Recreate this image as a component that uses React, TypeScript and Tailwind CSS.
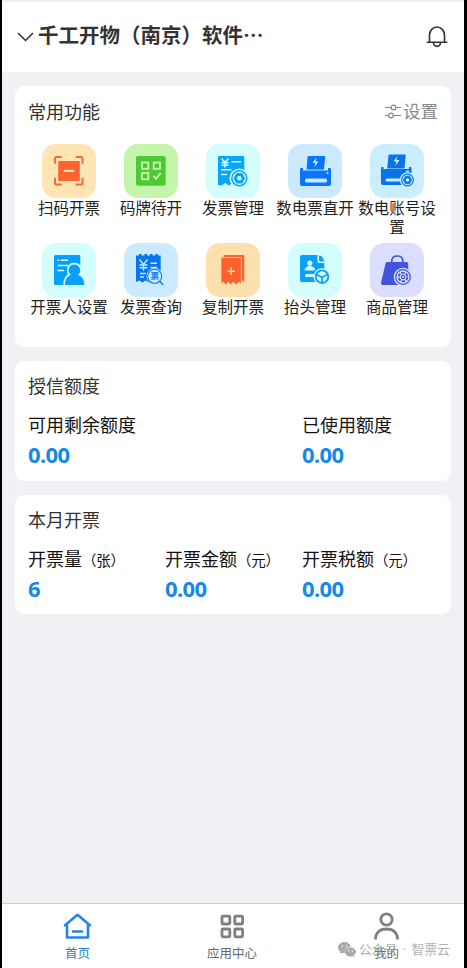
import React from "react";

const features = [
  { name: "扫码开票", bg: "bg-[#ffe5b4]", icon: <ScanIcon /> },
  { name: "码牌待开", bg: "bg-[#c5f5ab]", icon: <CodeIcon /> },
  { name: "发票管理", bg: "bg-[#d3fdff]", icon: <InvoiceIcon /> },
  { name: "数电票直开", bg: "bg-[#cbeaff]", icon: <PrinterIcon /> },
  { name: "数电账号设置", bg: "bg-[#cbeeff]", icon: <AccountIcon /> },
  { name: "开票人设置", bg: "bg-[#d3fdff]", icon: <DrawerIcon /> },
  { name: "发票查询", bg: "bg-[#cbeaff]", icon: <QueryIcon /> },
  { name: "复制开票", bg: "bg-[#fde0ae]", icon: <CopyIcon /> },
  { name: "抬头管理", bg: "bg-[#d3fdff]", icon: <TitleIcon /> },
  { name: "商品管理", bg: "bg-[#dcdeff]", icon: <GoodsIcon /> },
];

function ScanIcon() {
  return (
    <svg viewBox="0 0 54 54" fill="none">
      <path d="M13 19v-4.500q0-1.500 1.500-1.500H19M34.500 13H39q1.500 0 1.500 1.500V19M40.500 34.500V39q0 1.500-1.500 1.500h-4.500M19 40.500h-4.500Q13 40.500 13 39v-4.500" stroke="#fb6830" strokeWidth="2" strokeLinecap="round" />
      <rect x="16.200" y="17" width="21.600" height="20" rx="1" fill="#ff6430" />
      <path d="M22.500 26.800h8.800" stroke="#ffe5b4" strokeWidth="2.200" strokeLinecap="round" />
    </svg>
  );
}

function CodeIcon() {
  return (
    <svg viewBox="0 0 54 54" fill="none">
      <rect x="12" y="12" width="29.700" height="29.700" rx="2" fill="#4dc934" />
      <g stroke="#c5f5ab" strokeWidth="1.900">
        <rect x="18" y="18.500" width="6.300" height="6.300" />
        <rect x="29.700" y="18.500" width="6.300" height="6.300" />
        <rect x="18" y="29" width="6.300" height="6.300" />
        <path d="M29.500 32l2.500 2.800 4.700-5.800" />
      </g>
    </svg>
  );
}

function Gear({ x, y, r, color, bg }: { x: number; y: number; r: number; color: string; bg: string }) {
  return (
    <g transform={`translate(${x} ${y}) scale(${r / 8})`}>
      <circle r="9.500" fill={bg} />
      <circle r="7.200" fill={bg} stroke={color} strokeWidth="1.500" />
      <path d="M-2.500-4.500h5L5 0 2.500 4.500h-5L-5 0z" fill={color} stroke={color} strokeWidth="1" strokeLinejoin="round" />
      <circle r="2.200" fill={bg} />
    </g>
  );
}

function InvoiceIcon() {
  return (
    <svg viewBox="0 0 54 54" fill="none">
      <path d="M13 12h24.300q1 0 1 1v28l-4-2-4 2.500-4-2.500-3.500 2.500-3.500-2.500-3.500 2.500L12 41V13q0-1 1-1z" fill="#08a5f8" />
      <path d="M15.500 14.500l3.500 4 3.500-4M19 18.500v5M15.500 18.800h7M15.500 21.300h7M25.500 17.700h9.500M15 25.800h10.500M15 30.500h6" stroke="#d3fdff" strokeWidth="1.500" />
      <Gear x={33.3} y={34.3} r={8.3} color="#08a5f8" bg="#d3fdff" />
    </svg>
  );
}

function PrinterIcon() {
  return (
    <svg viewBox="0 0 54 54" fill="none">
      <path d="M12 25q0-1 1-1h2v2.500h25V24h2q1 0 1 1v15q0 2-2 2H14q-2 0-2-2z" fill="#0874ff" />
      <path d="M20.500 12h15.800q1 0 .9 1L36 25.500H18.500L19.600 13q0-1 .9-1z" fill="#0874ff" />
      <path d="M28.500 13.500l-4 5.500h3l-1.200 4.500 4.200-6h-3z" fill="#cbeaff" />
      <rect x="17" y="34.500" width="22" height="4" rx="1.500" fill="#cbeaff" />
      <circle cx="39.500" cy="29" r="1" fill="#cbeaff" />
    </svg>
  );
}

function AccountIcon() {
  return (
    <svg viewBox="0 0 54 54" fill="none">
      <path d="M11 24q0-1 1-1h1.500v2H39v-2h1.500q1 0 1 1v15q0 2-2 2H13q-2 0-2-2z" fill="#0874e9" />
      <path d="M19.500 10.500h15.300q1 0 .9 1l-1.200 13H17.200l1.300-13q0-1 1-1z" fill="#0874e9" />
      <path d="M27.500 12l-4 5.500h3L25.300 22l4.200-6h-3z" fill="#cbeeff" />
      <path d="M17 36h15" stroke="#cbeeff" strokeWidth="3" strokeLinecap="round" />
      <path d="M36 27.500h3" stroke="#cbeeff" strokeWidth="1.500" />
      <Gear x={37.5} y={36} r={6.5} color="#0874e9" bg="#cbeeff" />
    </svg>
  );
}

function DrawerIcon() {
  const person = "M32.300 21.500a5.800 5.800 0 0 0-3.300 10.500c-4 1.200-6 4.500-6 10h19.300c0-5.500-2.300-8.800-6.500-10a5.800 5.800 0 0 0-3.500-10.500z";
  return (
    <svg viewBox="0 0 54 54" fill="none">
      <rect x="12" y="12" width="26.300" height="30" rx="1.500" fill="#08a0fa" />
      <path d="M15.500 17.300h1.500M18.500 17.300h7.500M15.500 22.500h10.500M15.500 27.500h6.500" stroke="#d3fdff" strokeWidth="1.500" />
      <path d={person} stroke="#d3fdff" strokeWidth="3.400" />
      <path d={person} fill="#08a0fa" />
    </svg>
  );
}

function QueryIcon() {
  return (
    <svg viewBox="0 0 54 54" fill="none">
      <path d="M12 12.500h3V11h2.500v1.500h3V11H23v1.500h3V11h2.500v1.500h3V11H34v1.500h2.700v26L34 37.500l-3 2-3-2-3 2-3.500-2-3 2-3-2-3.500 1.500z" fill="#0874ee" />
      <path d="M15.500 16.500l4 5 4-5M19.500 21.500v6M15.500 22h8M15.500 24.700h8M26.500 20.300h6.500M26.500 24.500h6.500M16 30.500h6M16 34h4" stroke="#cbeaff" strokeWidth="1.400" />
      <circle cx="30.700" cy="33.300" r="8.200" fill="#cbeaff" />
      <circle cx="30.700" cy="33.300" r="7" stroke="#0874ee" strokeWidth="1.100" />
      <path d="M36 38.500l3.200 3.500" stroke="#0874ee" strokeWidth="1.300" />
      <text x="30.700" y="36.400" textAnchor="middle" fontSize="8.500" fontWeight="700" fill="#0874ee">票</text>
    </svg>
  );
}

function CopyIcon() {
  return (
    <svg viewBox="0 0 54 54" fill="none">
      <path d="M17.500 14v-1.200q0-.8.8-.8h19.200q.8 0 .8.800V39l-3-2V14z" fill="#f86532" />
      <path d="M15 15.500q0-1 1-1h18.300q1 0 1 1V41l-2.500-2-2.500 3-3-3-2.500 3-2.500-3-2.500 3-2.500-3-2.300 2z" fill="#ff6030" stroke="#fde0ae" strokeWidth=".7" />
      <path d="M25.200 24.500v7.500M21.500 28.200h7.500" stroke="#fde0ae" strokeWidth="1.600" />
    </svg>
  );
}

function TitleIcon() {
  return (
    <svg viewBox="0 0 54 54" fill="none">
      <path d="M14 12h15.500v6q0 2 2 2h4.800v19H14q-2 0-2-2V14q0-2 2-2z" fill="#08a0fa" />
      <path d="M31 12.500v4.500q0 1.500 1.500 1.500h4l-2-4q-.8-2-3.500-2z" fill="#08a0fa" />
      <circle cx="21.800" cy="20" r="2.600" fill="#d3fdff" />
      <path d="M21.800 21v3M17 27q0-3 4.800-3.700Q26.700 24 26.700 27z" stroke="#d3fdff" strokeWidth="1" fill="#d3fdff" />
      <path d="M18.500 32.500h7.500" stroke="#d3fdff" strokeWidth="3" strokeLinecap="round" />
      <circle cx="34" cy="33.700" r="8.500" fill="#d3fdff" />
      <circle cx="34" cy="33.700" r="6.300" stroke="#08a0fa" strokeWidth="1.800" />
      <path d="M28.500 31.500l5.500 2.700 5.500-2.700M34 34v5.500" stroke="#08a0fa" strokeWidth="1.700" />
    </svg>
  );
}

function GoodsIcon() {
  return (
    <svg viewBox="0 0 54 54" fill="none">
      <path d="M21.800 21v-3q0-5 5.500-5t5.500 5v3" stroke="#4055dc" strokeWidth="1.700" />
      <path d="M17.200 19h19.300q1.500 0 1.700 1.500L38.500 40q.3 2-1.700 2H12.500q-1.800 0-1.500-2l4.500-19.500Q15.800 19 17.200 19z" fill="#4055dc" />
      <circle cx="33" cy="34" r="9.300" fill="#dcdeff" />
      <circle cx="33" cy="34" r="7.300" stroke="#4055dc" strokeWidth="1.300" />
      <circle cx="33" cy="34" r="4.300" stroke="#4055dc" strokeWidth="1.900" strokeDasharray="3.300 1.200" />
      <circle cx="33" cy="34" r="1.600" stroke="#4055dc" strokeWidth="1.200" />
    </svg>
  );
}

function Stat({ label, unit, value }: { label: string; unit?: string; value: string }) {
  return (
    <div className="whitespace-nowrap">
      <div className="h-7 text-[18px] leading-[28px] text-[#111]">
        {label}
        {unit && <span className="text-[14.500px] tracking-[-0.300px]">{unit}</span>}
      </div>
      <div className="mt-px font-['Noto_Sans'] text-[22px] leading-[30px] font-bold tracking-[-0.600px] text-[#1688e6]">{value}</div>
    </div>
  );
}

function App() {
  return (
    <div className="flex h-[968px] w-[467px] flex-col overflow-hidden border-r-[3px] border-l-2 border-black bg-[#f0f0f5] pt-0.5 font-['Noto_Sans_CJK_SC',sans-serif]">
      <header className="flex h-[70px] shrink-0 items-center bg-white pr-4 pl-[15px]">
        <svg className="h-[10px] w-[17px]" viewBox="0 0 17 10" fill="none">
          <path d="M1 1l7.500 7.500L16 1" stroke="#333" strokeWidth="1.500" />
        </svg>
        <h1 className="mb-1.5 ml-1 text-[20.500px] font-bold text-[#333]">千工开物（南京）软件…</h1>
        <svg className="mb-0.5 ml-auto h-[23px] w-[22px]" viewBox="0 0 22 23" fill="none" stroke="#333" strokeWidth="1.600">
          <path d="M3.500 17.200V10a7.500 8 0 0 1 15 0v7.200M.7 17.200h20.600M7.500 18c.5 4.500 6.500 4.500 7 0" />
        </svg>
      </header>

      <main className="flex flex-col gap-[14px] px-[13px] pt-[14px]">
        <section className="h-[261px] rounded-[9px] bg-white px-[13px]">
          <div className="flex h-[58px] items-center justify-between pb-2 text-[18px]">
            <h2 className="text-[#333]">常用功能</h2>
            <div className="flex items-center gap-0.5 text-[17.500px] text-[#888]">
              <svg className="h-[15px] w-[16px]" viewBox="0 0 16 15" fill="none" stroke="#888" strokeWidth="1.200">
                <path d="M0 3.500h6M11 3.500h5M0 11.500h3.500M8.500 11.500H16" />
                <circle cx="8.500" cy="3.500" r="2.400" />
                <circle cx="6" cy="11.500" r="2.400" />
              </svg>
              设置
            </div>
          </div>
          <div className="grid grid-cols-5 gap-y-2">
            {features.map((item) => (
              <div key={item.name} className="flex flex-col items-center">
                <div className={`h-[54px] w-[54px] rounded-[14px] ${item.bg}`}>{item.icon}</div>
                <div className="w-[79px] text-center text-[15.500px] leading-[18.500px] text-[#222]">{item.name}</div>
              </div>
            ))}
          </div>
        </section>

        <section className="h-[120px] rounded-[9px] bg-white px-[13px] pt-[10px]">
          <h2 className="mb-[11px] text-[18px] leading-7 text-[#333]">授信额度</h2>
          <div className="grid grid-cols-[274px_1fr]">
            <Stat label="可用剩余额度" value="0.00" />
            <Stat label="已使用额度" value="0.00" />
          </div>
        </section>

        <section className="h-[119px] rounded-[9px] bg-white px-[13px] pt-[10px]">
          <h2 className="mb-[11px] text-[18px] leading-7 text-[#333]">本月开票</h2>
          <div className="grid grid-cols-[137px_137px_1fr]">
            <Stat label="开票量" unit="（张）" value="6" />
            <Stat label="开票金额" unit="（元）" value="0.00" />
            <Stat label="开票税额" unit="（元）" value="0.00" />
          </div>
        </section>
      </main>

      <nav className="relative mt-auto grid h-[65px] shrink-0 grid-cols-3 border-t border-[#ccc] bg-white pt-2 text-[12.500px] leading-[18px] text-[#666]">
        <div className="flex flex-col items-center gap-[3px] pr-[3px] text-[#1c7fc4]">
          <svg className="h-[29px] w-[29px]" viewBox="0 0 29 29" fill="none" stroke="#2485e8" strokeWidth="2.600" strokeLinejoin="round" strokeLinecap="round">
            <path d="M2 13.200L14.500 2.800 27 13.200M4 12v13.500h21V12M10 19.500h9" />
          </svg>
          首页
        </div>
        <div className="flex flex-col items-center gap-[3px] pr-0.5">
          <svg className="h-[29px] w-[29px]" viewBox="0 0 29 29" fill="none" stroke="#808080" strokeWidth="2.800">
            <rect x="4" y="4.200" width="7.800" height="7.800" rx="1" />
            <rect x="16.800" y="4.200" width="7.800" height="7.800" rx="1" />
            <rect x="4" y="17" width="7.800" height="7.800" rx="1" />
            <rect x="16.800" y="17" width="7.800" height="7.800" rx="1" />
          </svg>
          应用中心
        </div>
        <div className="flex flex-col items-center gap-[3px] pr-px">
          <svg className="h-[29px] w-[29px]" viewBox="0 0 29 29" fill="none" stroke="#808080" strokeWidth="2.800">
            <circle cx="14.500" cy="7.500" r="5.700" />
            <path d="M3.500 27.500c0-6.500 4-10.500 11-10.500s11 4 11 10.500" />
          </svg>
          我的
        </div>
        {/* watermark sits over the last tab */}
        <div className="absolute top-[36px] left-[336px] flex items-center gap-[3px] text-[12.800px] text-[#999]/80">
          <svg className="h-[15px] w-[18px]" viewBox="0 0 18 15">
            <path d="M6.500 0C2.900 0 0 2.500 0 5.500c0 1.800 1 3.300 2.500 4.300L2 12l2.400-1.300q1 .3 2.300.3C6.300 7.500 9 5 12.800 4.500 12 1.800 9.500 0 6.500 0z" fill="#aaa" />
            <path d="M12.500 5.500C9.500 5.500 7 7.500 7 10s2.500 4.500 5.500 4.500q1 0 1.800-.3L16.300 15l-.5-1.800C17.200 12.400 18 11.300 18 10c0-2.500-2.500-4.500-5.500-4.500z" fill="#aaa" />
            <g fill="#fff">
              <circle cx="4.500" cy="4" r=".8" />
              <circle cx="8.600" cy="4" r=".8" />
              <circle cx="10.700" cy="9" r=".7" />
              <circle cx="14.300" cy="9" r=".7" />
            </g>
          </svg>
          <span className="font-['Noto_Sans','Noto_Sans_CJK_SC',sans-serif] whitespace-pre [word-spacing:2px]">公众号 · 智票云</span>
        </div>
      </nav>
    </div>
  );
}

export default App;
